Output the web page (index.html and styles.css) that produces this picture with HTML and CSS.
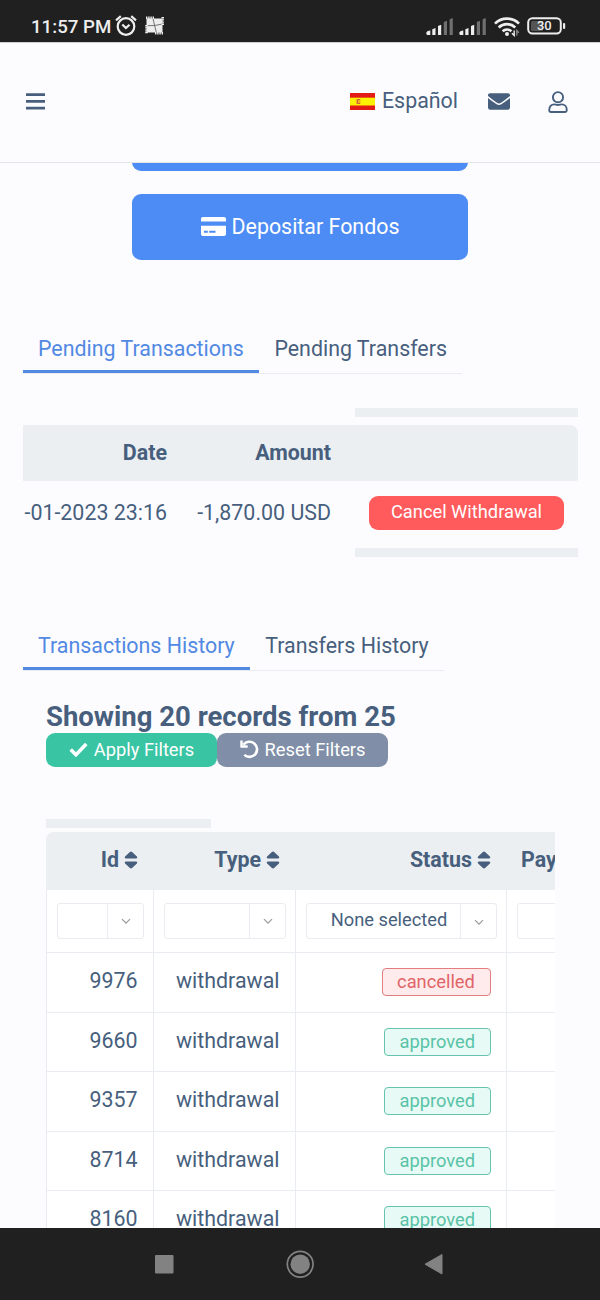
FILE: index.html
```html
<!DOCTYPE html>
<html lang="es">
<head>
<meta charset="utf-8">
<title>Transactions</title>
<link rel="stylesheet" href="styles.css">
</head>
<body>
<svg class="sprite" width="0" height="0">
  <symbol id="sort" viewBox="0 0 14 18"><path d="M7 .4c.4 0 .8.2 1.100.5l4.800 4.700c.8.8.3 1.900-.8 1.900H1.900C.8 7.500.300 6.400 1.100 5.600L5.900.9C6.200.6 6.600.4 7 .4zM7 17.600c.4 0 .8-.2 1.100-.5l4.800-4.700c.8-.8.3-1.900-.8-1.900H1.900c-1.100 0-1.600 1.100-.8 1.900l4.800 4.700c.3.3.7.5 1.100.5z" fill="currentColor"/></symbol>
  <symbol id="chev" viewBox="0 0 10 7"><path d="M1 1.200l4 4 4-4" fill="none" stroke="#999" stroke-width="1.200"/></symbol>
  <symbol id="signal" viewBox="0 0 28 18"><path fill="#eee" d="M.3 16c0-1 1-2 2.700-2.300l1.300-.2v4.400H.8zM6.300 12.300l3.200-1.300v6.900H6.300zM12 9l3.200-1.300v10.200H12z"/><path fill="#707070" d="M17.800 5l3.200-1.300v14.200h-3.200zM23.600 2.200l3.200-1.300v17h-3.200z"/></symbol>
</svg>
<div class="screen">
  <div class="statusbar">
    <span class="clock">11:57 PM</span>
    <svg class="alarm" width="22" height="21" viewBox="0 0 22 21" fill="none" stroke="#eee"><circle cx="11" cy="11.500" r="8.300" stroke-width="2.200"/><path d="M1 5.300L5.800 1.200M21 5.300l-4.800-4.100M7.300 9.500l3.600 3.600 3.600-3.300" stroke-width="2.200"/></svg>
    <svg class="notif" width="19" height="19" viewBox="0 0 19 19"><path d="M1.500 2.500h16v14h-16z" fill="#eee"/><path d="M8 2.500l1.600 7 2 8M.5 9.700l9.100-.2 9-1.700" fill="none" stroke="#555" stroke-width=".8"/><path d="M1 1.800h8M10 17.200h8" stroke="#eee" stroke-width="2.600" stroke-dasharray="1.400 .8"/><path d="M1.500 9v9M17.800 1v8" stroke="#eee" stroke-width="2.600" stroke-dasharray="1.400 .8"/></svg>
    <div class="indicators">
      <svg width="28" height="18"><use href="#signal"/></svg>
      <svg width="28" height="18"><use href="#signal"/></svg>
      <svg class="wifi" width="26" height="20" viewBox="0 0 26 20" fill="none" stroke="#eee" stroke-width="2.700"><path d="M1 6.600a17 17 0 0 1 24 0M4.700 10.500a12 12 0 0 1 16.600 0M8.600 14.300a6.600 6.600 0 0 1 8.800 0"/><circle cx="13" cy="17" r="2" fill="#eee" stroke="none"/><path d="M20.200 13.500v5l-2.300-2.200" stroke-width="1.400"/><path d="M22.800 18.500v-5l2 2.300" stroke="#888" stroke-width="1.400"/></svg>
      <svg class="battery" width="39" height="18" viewBox="0 0 39 18"><rect x="4" y="4" width="12" height="10" rx="1.500" fill="#555"/><rect x="1.200" y="1.200" width="32.600" height="15.300" rx="4.200" fill="none" stroke="#eee" stroke-width="2"/><rect x="36" y="6" width="2.200" height="6" rx="1" fill="#eee"/><text x="17.300" y="13.300" text-anchor="middle" class="battery-text">30</text></svg>
    </div>
  </div>

  <header class="header">
    <svg class="menu" width="19" height="17" viewBox="0 0 19 17"><path d="M0 1.700h19M0 8.400h19M0 15.200h19" stroke="#475f7d" stroke-width="2.800"/></svg>
    <div class="lang">
      <svg width="25" height="17" viewBox="0 0 25 17"><path fill="#e31b16" d="M0 0h25v17H0z"/><path fill="#fcf003" d="M0 4.700h25v7.800H0z"/><path fill="#f0b020" d="M6 6h4.500v5H6z"/><path d="M10 6.500H7.500v4H10" stroke="#cf6038" fill="none"/></svg>
      <span>Español</span>
    </div>
    <svg class="mail" width="22" height="17" viewBox="0 0 22 17"><path fill="#475f7d" d="M2 .2h18c1.200 0 2 .8 2 1.900v.8c-2 1.700-5 3.900-7.200 5.500-1.300.9-2.500 2-3.800 2S8.500 9.300 7.200 8.400C5 6.800 2 4.600 0 2.900v-.8C0 1 .8.2 2 .2zM0 4.900c2 1.600 4.600 3.500 6.500 4.900 1.300.9 2.800 2.100 4.500 2.100s3.200-1.200 4.500-2.100c1.900-1.400 4.500-3.300 6.500-4.900v9.700c0 1.200-.9 2.100-2 2.100H2c-1.100 0-2-.9-2-2.100z"/></svg>
    <svg class="user" width="20" height="22" viewBox="0 0 20 22" fill="none" stroke="#475f7d" stroke-width="1.900"><circle cx="10" cy="6.200" r="5.100"/><path d="M6.200 13.400c1.500 0 2.200.6 3.800.6s2.300-.6 3.800-.6c3 0 4.900 2.200 4.900 5v1.100c0 .9-.6 1.500-1.500 1.500H2.800c-.9 0-1.500-.6-1.500-1.500v-1.100c0-2.800 1.900-5 4.900-5z"/></svg>
  </header>

  <main class="main">
    <div class="actions">
      <div class="action"></div>
      <div class="action"><svg width="25" height="19" viewBox="0 0 25 19"><path fill="#fff" fill-rule="evenodd" d="M2 0h21c1.200 0 2 .8 2 2v2.500H0V2C0 .8.800 0 2 0zM0 8.800h25V17c0 1.200-.8 2-2 2H2c-1.200 0-2-.8-2-2zM3 13.800v2h3.800v-2zm5.200 0v2h6.300v-2z"/></svg><span>Depositar Fondos</span></div>
    </div>

    <nav class="tabs pending-tabs"><span class="tab tab-on">Pending Transactions</span><span class="tab">Pending Transfers</span></nav>
    <section class="pending">
      <div class="scrollbar"></div>
      <div class="pending-head"><b class="date">Date</b><b class="amount">Amount</b></div>
      <div class="pending-row"><span class="date">-01-2023 23:16</span><span class="amount">-1,870.00 USD</span><span class="cancel">Cancel Withdrawal</span></div>
      <div class="scrollbar"></div>
    </section>

    <nav class="tabs history-tabs"><span class="tab tab-on">Transactions History</span><span class="tab">Transfers History</span></nav>
    <section class="history">
      <h2 class="title">Showing 20 records from 25</h2>
      <div class="filters">
        <span class="btn apply"><svg width="19" height="15" viewBox="0 0 19 15"><path d="M1.700 7.600l5.200 5.200L17.300 2" fill="none" stroke="#fff" stroke-width="3.500"/></svg>Apply Filters</span>
        <span class="btn reset"><svg width="19" height="19" viewBox="0 0 19 19"><path d="M3.400 4.700A7.600 7.600 0 1 1 4.300 14.900" fill="none" stroke="#fff" stroke-width="2.600"/><path d="M.3.500h2.400v4.800h5v2.500H1.300c-.6 0-1-.4-1-1z" fill="#fff"/></svg>Reset Filters</span>
      </div>
      <div class="history-scroll"></div>
      <div class="grid">
        <div class="tr head"><b>Id<svg width="14" height="18"><use href="#sort"/></svg></b><b>Type<svg width="14" height="18"><use href="#sort"/></svg></b><b>Status<svg width="14" height="18"><use href="#sort"/></svg></b><b class="last">Pay</b></div>
        <div class="tr filter">
          <div><p class="select"><span></span><i><svg width="10" height="7"><use href="#chev"/></svg></i></p></div>
          <div><p class="select"><span></span><i><svg width="10" height="7"><use href="#chev"/></svg></i></p></div>
          <div><p class="select"><span>None selected</span><i class="low"><svg width="10" height="7"><use href="#chev"/></svg></i></p></div>
          <div><p class="select wide"></p></div>
        </div>
        <div class="tr row"><div>9976</div><div>withdrawal</div><div><em class="badge cancelled">cancelled</em></div><div></div></div>
        <div class="tr row"><div>9660</div><div>withdrawal</div><div><em class="badge">approved</em></div><div></div></div>
        <div class="tr row"><div>9357</div><div>withdrawal</div><div><em class="badge">approved</em></div><div></div></div>
        <div class="tr row"><div>8714</div><div>withdrawal</div><div><em class="badge">approved</em></div><div></div></div>
        <div class="tr row"><div>8160</div><div>withdrawal</div><div><em class="badge">approved</em></div><div></div></div>
      </div>
    </section>
  </main>

  <footer class="navbar">
    <svg width="600" height="72" viewBox="0 0 600 72" fill="#828282"><rect x="155" y="27" width="18.500" height="18.500" rx="1"/><circle cx="300.200" cy="36.200" r="9.700"/><circle cx="300.200" cy="36.200" r="12.900" fill="none" stroke="#828282" stroke-width="1.700"/><path d="M425 36.200L442 26.500v19.500z" stroke="#828282" stroke-linejoin="round"/></svg>
  </footer>
</div>
</body>
</html>
```
FILE: styles.css
```css
* { box-sizing: border-box; }
body { margin: 0; background: #fcfcff; color: #475f7d; font: 21.4px/26px Roboto, "Liberation Sans", sans-serif; }
svg { display: block; flex: none; }
.sprite { display: none; }
.screen { width: 600px; height: 1300px; overflow: hidden; display: grid; grid-template-rows: 42px 121px 1065px 72px; white-space: nowrap; }

.statusbar { display: flex; align-items: flex-start; background: #202020; color: #eee; padding: 14px 34px 0 31px; }
.clock { font-size: 18.7px; font-weight: 500; width: 84px; }
.alarm { margin-top: 1px; }
.notif { margin: 2px 0 0 8px; }
.indicators { display: flex; margin-left: auto; padding-top: 3px; gap: 5.500px; }
.wifi { margin: 0 2px 0 1px; }
.battery-text { font: 500 13px Roboto, sans-serif; fill: #eee; }

.header { display: flex; align-items: center; padding: 0 32px 2px 26px; border-top: 1px solid #cfcfd1; border-bottom: 1px solid #e3e5e9; }
.lang { display: flex; align-items: center; gap: 7px; margin-left: auto; }
.lang span { padding-bottom: 1px; }
.mail { margin-left: 30px; }
.user { margin-left: 38px; }

.main { overflow: hidden; }
.actions { display: grid; gap: 23px; width: 336px; margin: -58px auto 0; }
.action { height: 66px; border-radius: 9px; background: #4d8cf4; color: #fff; display: flex; align-items: center; justify-content: center; gap: 6px; padding-bottom: 1px; }

.tabs { display: flex; width: max-content; margin-left: 23px; height: 52px; border-bottom: 1px solid #e9ecf0; }
.pending-tabs { margin-top: 62px; }
.tab { padding: 14px 15.500px 0; height: 51px; }
.tab-on { color: #5289e3; border-bottom: 3px solid #5289e3; padding: 14px 15px 0; }

.pending { margin: 34px 22px 0 23px; }
.scrollbar { height: 9px; width: 223px; margin-left: auto; background: #ebeff2; }
.pending-head, .pending-row { display: grid; grid-template-columns: 144px 164px 1fr; align-items: center; text-align: right; }
.pending-head { height: 56px; margin-top: 8px; background: #ebeff2; border-radius: 0 8px 2px 0; }
.pending-row { height: 67px; padding-bottom: 3px; }
.cancel { justify-self: end; width: 195px; height: 34px; margin-right: 14px; border-radius: 9px; background: #ff5b5c; color: #fff; font-size: 18.300px; line-height: 32px; text-align: center; }

.history-tabs { margin-top: 62px; }
.history { margin: 30px 45px 0 46px; }
.title { margin: 0; font-size: 27.5px; font-weight: 700; line-height: 32px; }
.filters { display: flex; }
.btn { display: flex; align-items: center; justify-content: center; width: 171px; height: 34px; border-radius: 9px; color: #fff; font-size: 18.300px; gap: 6px; padding-bottom: 1px; }
.apply { background: #39c4a4; }
.reset { background: #808fa7; }
.history-scroll { width: 165px; height: 9px; margin-top: 52px; background: #ebeff2; }
.grid { width: 509px; margin-top: 4px; overflow: hidden; background: #fff; border-radius: 8px 0 0 0; }
.tr { display: grid; grid-template-columns: 107px 142px 211px 49px; }
.head { height: 58px; background: #ebeff2; align-items: center; padding-bottom: 3px; }
.head b { display: flex; align-items: center; justify-content: flex-end; gap: 5px; padding-right: 15px; }
.head .last { justify-content: flex-start; padding: 0 0 0 15px; }
.filter > div, .row > div { border-left: 1px solid #e9ecf0; border-bottom: 1px solid #e9ecf0; }
.filter > div { height: 63px; padding: 13px 9px 0 10px; overflow: hidden; }
.select { display: flex; height: 36px; margin: 0; border: 1px solid #e9ecf0; border-radius: 3px; font-size: 18.300px; line-height: 31px; }
.select span { flex: 1; padding-left: 11px; text-align: center; }
.select i { display: grid; place-items: center; width: 36px; border-left: 1px solid #e9ecf0; }
.select .low { padding-top: 3px; }
.wide { width: 120px; }
.row > div { height: 59.500px; padding: 15px 15.500px 0 0; text-align: right; }
.badge { display: block; margin-left: auto; width: 106.500px; height: 28px; border: 1.500px solid #65c4ad; border-radius: 4px; background: #e8faf6; color: #58c3a6; font-size: 18.300px; font-style: normal; line-height: 25px; text-align: center; }
.cancelled { width: 109px; border-color: #e27d80; background: #ffebeb; color: #e06468; }

.navbar { background: #202020; }
```
